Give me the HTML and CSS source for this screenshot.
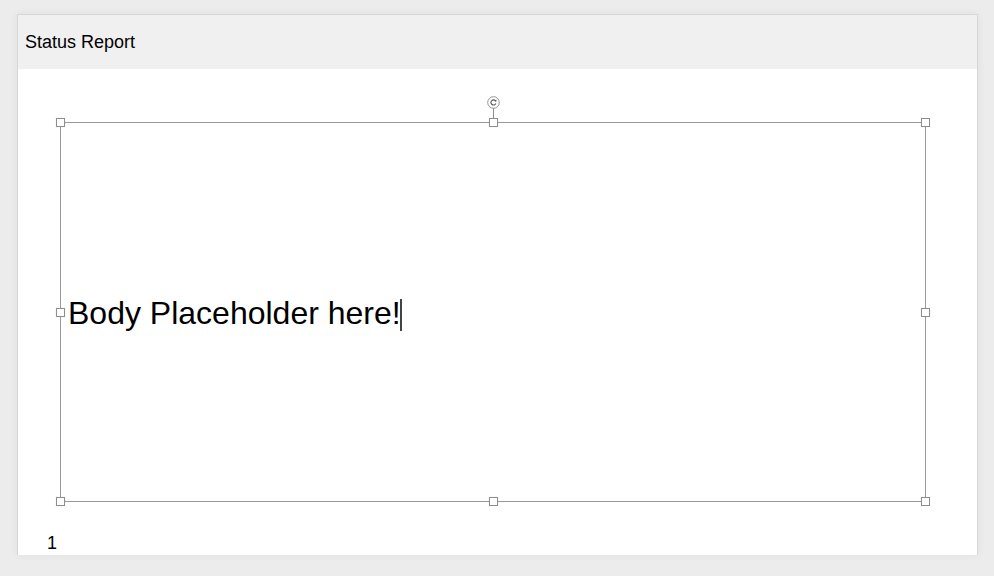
FILE: index.html
```html
<!DOCTYPE html>
<html>
<head>
<meta charset="utf-8">
<link rel="stylesheet" href="styles.css">
</head>
<body>
<div class="page">
  <div class="slide">
    <div class="header">Status Report</div>
    <div class="canvas">
      <div class="frame">
        <div class="rotate"><svg width="13" height="13" viewBox="0 0 13 13"><circle cx="6.5" cy="6.5" r="5.8" fill="#fff" stroke="#8a8a8a" stroke-width="0.9"/><path d="M8.7 5 A2.6 2.6 0 1 0 8.9 7.5" fill="none" stroke="#555" stroke-width="1.1"/><path d="M9.6 3.5 L9.2 5.7 L7.1 5.0 Z" fill="#555"/></svg></div>
        <div class="rot-line"></div>
        <span class="h tl"></span><span class="h tc"></span><span class="h tr"></span>
        <span class="h ml"></span><span class="h mr"></span>
        <span class="h bl"></span><span class="h bc"></span><span class="h br"></span>
        <div class="text">Body Placeholder here!<span class="caret"></span></div>
      </div>
      <div class="pagenum">1</div>
    </div>
  </div>
</div>
</body>
</html>
```
FILE: styles.css
```css
html, body {
  margin: 0;
  padding: 0;
  background: #ececec;
  font-family: "Liberation Sans", Arial, sans-serif;
  color: #000;
}
.page {
  width: 994px;
  height: 576px;
  padding: 14px 0 0 17px;
  box-sizing: border-box;
}
.slide {
  width: 961px;
  height: 541px;
  box-sizing: border-box;
  border: 1px solid #d7d7d7;
  border-bottom: none;
  background: #fff;
  box-shadow: 0 0 8px rgba(0,0,0,0.06);
  display: flex;
  flex-direction: column;
}
.header {
  height: 54px;
  background: #f0f0f0;
  font-size: 18px;
  line-height: 54px;
  padding-left: 7px;
}
.canvas {
  flex: 1;
  display: flex;
  flex-direction: column;
  padding: 53px 0 0 42px;
}
.frame {
  position: relative;
  width: 866px;
  height: 380px;
  box-sizing: border-box;
  border: 1px solid #9a9a9a;
  display: flex;
  align-items: center;
  padding-left: 7px;
}
.text {
  font-size: 32px;
  line-height: 37px;
  display: flex;
  align-items: center;
  margin-top: 2px;
}
.caret {
  display: inline-block;
  width: 2px;
  height: 32px;
  background: #444;
  margin-left: -1px;
  margin-top: 3px;
}
.h {
  position: absolute;
  width: 9px;
  height: 9px;
  box-sizing: border-box;
  border: 1px solid #8e8e8e;
  background: #fff;
  box-shadow: 0 0 1px rgba(0,0,0,0.15);
}
.tl { left: -5px; top: -5px; }
.tc { left: 428px; top: -5px; }
.tr { right: -5px; top: -5px; }
.ml { left: -5px; top: 185px; }
.mr { right: -5px; top: 185px; }
.bl { left: -5px; bottom: -5px; }
.bc { left: 428px; bottom: -5px; }
.br { right: -5px; bottom: -5px; }
.rotate {
  position: absolute;
  left: 426px;
  top: -27px;
  width: 13px;
  height: 13px;
}
.rotate svg { display: block; }
.rot-line {
  position: absolute;
  left: 432px;
  top: -15px;
  width: 1px;
  height: 11px;
  background: #8e8e8e;
}
.pagenum {
  font-size: 18px;
  line-height: 21px;
  margin: 31px 0 0 -13px;
}
```
